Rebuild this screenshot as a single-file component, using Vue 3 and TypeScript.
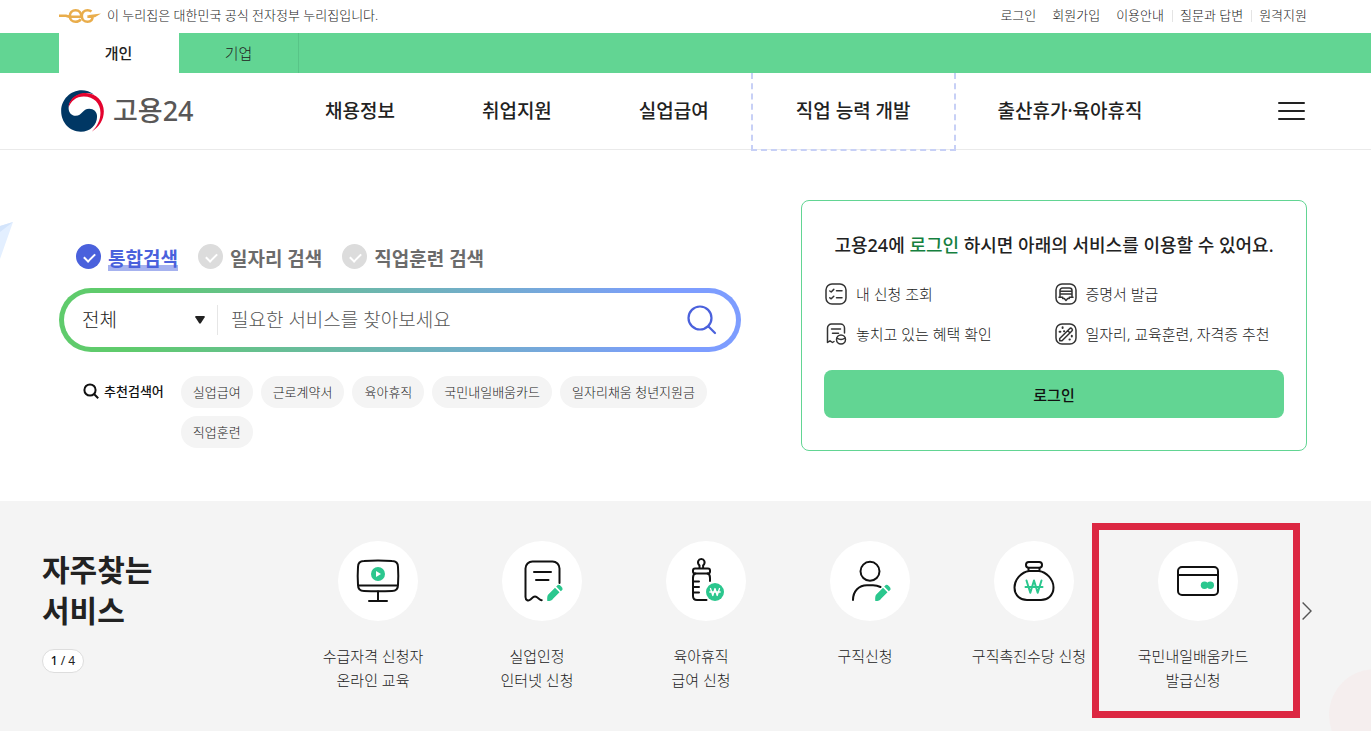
<script setup lang="ts">
import { ref } from 'vue'

interface Service {
  icon: string
  lines: string[]
  marked?: boolean
}

const utilLinks = [
  { label: '로그인', divided: false },
  { label: '회원가입', divided: false },
  { label: '이용안내', divided: false },
  { label: '질문과 답변', divided: true },
  { label: '원격지원', divided: true },
]
const menu = ['채용정보', '취업지원', '실업급여', '직업 능력 개발', '출산휴가·육아휴직']
const focusedMenu = '직업 능력 개발'

const modes = ['통합검색', '일자리 검색', '직업훈련 검색']
const mode = ref('통합검색')
const scope = ref('전체')
const keyword = ref('')
const keywords = ['실업급여', '근로계약서', '육아휴직', '국민내일배움카드', '일자리채움 청년지원금', '직업훈련']

const benefits = [
  { icon: 'list', label: '내 신청 조회' },
  { icon: 'certificate', label: '증명서 발급' },
  { icon: 'receipt', label: '놓치고 있는 혜택 확인' },
  { icon: 'wand', label: '일자리, 교육훈련, 자격증 추천' },
]

const services: Service[] = [
  { icon: 'monitor', lines: ['수급자격 신청자', '온라인 교육'] },
  { icon: 'document', lines: ['실업인정', '인터넷 신청'] },
  { icon: 'bottle', lines: ['육아휴직', '급여 신청'] },
  { icon: 'person', lines: ['구직신청'] },
  { icon: 'bag', lines: ['구직촉진수당 신청'] },
  { icon: 'card', lines: ['국민내일배움카드', '발급신청'], marked: true },
]
</script>

<template>
  <div class="page">
    <div class="topbar">
      <p class="official">
        <svg class="eg" viewBox="0 0 42 16" width="42" height="16" fill="none" stroke="#e9ad4b" stroke-width="2.6" aria-hidden="true">
          <path d="M0 7.800h7l3 1h12.400c0-4-2.200-6.600-5.800-6.600-3.400 0-5.800 2.600-5.800 5.800s2.400 5.800 5.800 5.800c2.400 0 4-.9 5.200-2.600" />
          <path d="M32.500 3.600c-1.100-.9-2.400-1.400-3.900-1.400-3.400 0-5.800 2.600-5.800 5.800s2.400 5.800 5.800 5.800c3.300 0 5-2 5-5.200h-5.200" />
          <path d="M30 7l12-1.400-6 3.600h-6z" fill="#e9ad4b" stroke="none" />
        </svg>
        <span>이 누리집은 대한민국 공식 전자정부 누리집입니다.</span>
      </p>
      <ul class="utils">
        <li v-for="link in utilLinks" :key="link.label" :class="{ divided: link.divided }">
          <a href="#">{{ link.label }}</a>
        </li>
      </ul>
    </div>

    <div class="tabs">
      <a href="#" class="tab current">개인</a>
      <a href="#" class="tab">기업</a>
    </div>

    <header class="header">
      <a href="#" class="logo">
        <svg viewBox="0 0 126 124" width="43" height="42" aria-hidden="true">
          <path fill="#003764" d="M98 14C86 5 73 1 61 1 27 1 0 29 0 62c0 34 25 61 58 61 28 0 48-20 48-45 0-14-10-23-23-23-20 0-21 21-40 21-12 0-21-9-21-23 0-21 18-39 44-43 12-1 23 0 32 4z" />
          <path fill="#e4032e" d="M22 52c0-22 19-40 44-43 36-3 60 24 60 54 0 25-14 47-36 60 16-15 26-34 26-56 0-28-20-48-49-48-23 0-39 14-45 33z" />
        </svg>
        <span>고용24</span>
      </a>
      <nav class="menu">
        <a v-for="item in menu" :key="item" href="#" :class="{ focused: item === focusedMenu }">{{ item }}</a>
      </nav>
      <button type="button" class="burger" aria-label="전체메뉴">
        <i></i><i></i><i></i>
      </button>
    </header>

    <main>
      <section class="hero">
        <svg class="plane" viewBox="0 0 13 40" width="13" height="40" aria-hidden="true">
          <path fill="#e3efff" d="M0 4L13 0 0 37z" />
          <path fill="#d3e4fb" d="M0 4L13 0 0 10z" />
        </svg>

        <form class="search" @submit.prevent>
          <div class="modes">
            <label v-for="m in modes" :key="m" class="mode">
              <input v-model="mode" type="radio" name="mode" :value="m" />
              <span>{{ m }}</span>
            </label>
          </div>
          <div class="searchbox">
            <div class="searchbox-inner">
              <div class="scope">
                <select v-model="scope" aria-label="검색 범위">
                  <option>전체</option>
                </select>
                <svg viewBox="0 0 10 8" width="10" height="8" aria-hidden="true">
                  <path fill="#222" d="M1 0h8q1.200.2.700 1.300L5.800 7.200q-.8.900-1.600 0L.3 1.300Q-.2.200 1 0z" />
                </svg>
              </div>
              <input v-model="keyword" class="query" type="text" aria-label="검색어" placeholder="필요한 서비스를 찾아보세요" />
              <button type="submit" class="go" aria-label="검색">
                <svg viewBox="0 0 30 30" width="30" height="30" fill="none" stroke="#4a61dc" stroke-width="2.200" stroke-linecap="round">
                  <circle cx="13" cy="13" r="11.500" />
                  <path d="M21.500 21.500l6.500 6.500" />
                </svg>
              </button>
            </div>
          </div>
          <div class="recommend">
            <strong>
              <svg viewBox="0 0 16 16" width="16" height="16" fill="none" stroke="#111" stroke-width="2" aria-hidden="true">
                <circle cx="7" cy="7" r="5.600" />
                <path d="M11 11l4.200 4.200" />
              </svg>
              추천검색어
            </strong>
            <ul>
              <li v-for="k in keywords" :key="k"><a href="#">{{ k }}</a></li>
            </ul>
          </div>
        </form>

        <section class="login">
          <h2>고용24에 <em>로그인</em> 하시면 아래의 서비스를 이용할 수 있어요.</h2>
          <ul>
            <li v-for="b in benefits" :key="b.label">
              <svg viewBox="0 0 22 22" width="22" height="22" fill="none" stroke="#333" stroke-width="1.500" stroke-linecap="round" stroke-linejoin="round" aria-hidden="true">
                <rect v-if="b.icon !== 'receipt'" x="1" y="1" width="20" height="20" rx="6" />
                <g v-if="b.icon === 'list'">
                  <path d="M4.800 8l1.400 1 2.600-2.600M4.800 14.800l1.400 1 2.600-2.600M11.500 7.700h5.500M11.500 14.700h5.500" />
                </g>
                <g v-else-if="b.icon === 'certificate'">
                  <path d="M5 14V7.500A2.500 2.500 0 0 1 7.500 5h7A2.500 2.500 0 0 1 17 7.500V14M5.500 8.200h11M5.500 11h11M4 14.300h3.700M14.300 14.300h3.700M7.700 14.300v1.200h1.600l1.700 2 1.700-2h1.600v-1.200" />
                </g>
                <g v-else-if="b.icon === 'receipt'">
                  <path d="M19.500 10V5a4 4 0 0 0-4-4h-9a4 4 0 0 0-4 4v14.500l2.500-1.700 2.500 1.700 1.500-1M6.500 6h9M7.500 10.300h6" />
                  <circle cx="16" cy="16.500" r="4.500" />
                  <path d="M12 15.200q4 2.600 8 0" />
                </g>
                <g v-else>
                  <path d="M14.600 5.700a1.600 1.600 0 0 1 2.300 2.300L7 17.800H4.700v-2.300zM12.800 7.800l2 2" />
                  <path d="M7.600 4.300v.8M4.600 8.800h.8M9 8.200h.2M16.800 12.800v.6M14.500 16.500h.3" stroke-width="2" />
                </g>
              </svg>
              <span>{{ b.label }}</span>
            </li>
          </ul>
          <button type="button">로그인</button>
        </section>
      </section>

      <section class="services">
        <div class="intro">
          <h2>자주찾는<br />서비스</h2>
          <p class="pager"><b>1</b> / 4</p>
        </div>
        <ul class="list">
          <li v-for="s in services" :key="s.icon" :class="{ marked: s.marked }">
            <a href="#">
              <svg class="disc" viewBox="0 0 80 80" width="80" height="80" fill="none" stroke="#111" stroke-width="2" stroke-linecap="round" stroke-linejoin="round" aria-hidden="true">
                <g v-if="s.icon === 'monitor'">
                  <path d="M26 20q14-.8 28 0 6 0 6 6 .6 9 0 18 0 6-6 6-14 .6-28 0-6 0-6-6-.6-9 0-18 0-6 6-6zM20 44.500h40M40 50v10M31 60h18" />
                  <circle cx="40" cy="33" r="7" fill="#2bc78e" stroke="none" />
                  <path d="M38 30v6l5-3z" fill="#fff" stroke="none" />
                </g>
                <g v-else-if="s.icon === 'document'">
                  <path d="M57.500 42V27.500a7 7 0 0 0-7-7h-20a7 7 0 0 0-7 7V56c0 3.500 3 4.200 5 2.500l2.500-2.200q2-1.500 4 0l2.200 1.700q1.200 1 2.500 1.200M32 31h17M34 39h12.500" />
                </g>
                <g v-else-if="s.icon === 'bottle'">
                  <path d="M33.500 27v-2.500c-3-3-1-6.500 1.800-6.500s4.800 3.500 1.800 6.500V27" />
                  <rect x="27" y="27.500" width="17" height="5" rx="2" />
                  <path d="M44 40v-3q0-4-2.500-4.500M29.500 32.500Q27 33 27 37v18q0 4 4 4h9.500M27 40.500h6M27 46h6M27 51.500h6" />
                  <circle cx="49" cy="51" r="9" fill="#2bc78e" stroke="none" />
                  <path d="M44.500 47.500l2.300 7 2.200-7 2.200 7 2.300-7M43.800 51h10.400" stroke="#fff" stroke-width="1.300" />
                </g>
                <g v-else-if="s.icon === 'person'">
                  <circle cx="40" cy="30.300" r="9.500" />
                  <path d="M23 59c0-9 6-14.800 14-14.800h6c2.800 0 5.200.6 7.500 1.800" />
                </g>
                <g v-else-if="s.icon === 'bag'">
                  <rect x="32" y="21" width="16" height="5.800" rx="2.800" />
                  <path d="M34.500 27v3M45.500 27v3M35 30h10c7 1 14.500 8 14.500 16.500S53 59 47 59H33c-6 0-12.500-4-12.500-12.500S28 31 35 30z" />
                  <path d="M32.500 39.500l3.800 12.300L40 39.500l3.700 12.300 3.800-12.300M31.500 46h17" stroke="#2bc78e" />
                </g>
                <g v-else>
                  <rect x="20" y="26" width="40" height="28" rx="4" />
                  <path d="M20 34h40" />
                  <g fill="#2bc78e" stroke="none">
                    <circle cx="46.500" cy="44.300" r="3.700" />
                    <circle cx="52.300" cy="44.300" r="3.700" />
                  </g>
                </g>
                <g v-if="s.icon === 'document' || s.icon === 'person'" fill="#2bc78e" stroke="none">
                  <path d="M45.300 60q-.6-5 1.200-6.800l6.500-6.500 4.500 4.500-6.500 6.500Q50 60 45.300 60z" />
                  <path d="M54.200 45.600l1.600-1.600q1.300-.6 3.300 1.300t1.400 3.500l-1.700 1.400z" />
                </g>
              </svg>
              <span>
                <template v-for="(line, i) in s.lines" :key="line"><br v-if="i > 0" />{{ line }}</template>
              </span>
            </a>
          </li>
        </ul>
        <button type="button" class="next" aria-label="다음">
          <svg viewBox="0 0 10 20" width="10" height="20" fill="none" stroke="#555" stroke-width="1.400">
            <path d="M.6 1.500L9 10 .6 18.500" />
          </svg>
        </button>
        <div class="blob"></div>
      </section>
    </main>
  </div>
</template>

<style>
body {
  background: #fff;
}
</style>

<style scoped>
.page,
.page * {
  box-sizing: border-box;
}
.page {
  font-family: "Noto Sans", "Noto Sans CJK KR", sans-serif;
  font-size: 15px;
  color: #222;
  overflow-x: hidden;
}
a {
  color: inherit;
  text-decoration: none;
}
ul,
p,
h2 {
  margin: 0;
  padding: 0;
  list-style: none;
}
button,
input,
select {
  font: inherit;
  color: inherit;
  margin: 0;
  padding: 0;
  border: 0;
  background: none;
}
svg {
  flex: none;
  display: block;
}

.topbar {
  display: flex;
  justify-content: space-between;
  align-items: center;
  padding: 4px 64px 6px 59px;
  font-size: 13px;
  line-height: 23px;
  font-weight: 300;
}
.official {
  display: flex;
  align-items: center;
  gap: 6px;
}
.utils {
  display: flex;
  gap: 16px;
}
.utils .divided {
  position: relative;
}
.utils .divided::before {
  content: "";
  position: absolute;
  left: -8px;
  top: 6px;
  height: 12px;
  border-left: 1px solid #e4e4e4;
}

.tabs {
  display: flex;
  padding-left: 59px;
  background: #62d593;
}
.tab {
  width: 120px;
  line-height: 40px;
  text-align: center;
  border-right: 1px solid #58c487;
  font-weight: 300;
}
.tab.current {
  background: #fff;
  border-color: #fff;
  font-weight: 500;
}

.header {
  display: flex;
  align-items: center;
  height: 77px;
  padding: 0 66px 0 61px;
  border-bottom: 1px solid #eaeaea;
}
.logo {
  display: flex;
  align-items: center;
  gap: 9px;
  width: 221px;
  font-size: 27px;
  font-weight: 500;
  line-height: 40px;
  color: #595757;
}
.menu {
  display: flex;
  flex: 1;
  gap: 3px;
  font-size: 19px;
  font-weight: 500;
  line-height: 77px;
  margin-left: 1px;
}
.menu a {
  position: relative;
  padding: 0 42px;
  white-space: nowrap;
}
.menu .focused::after {
  content: "";
  position: absolute;
  inset: 0 -3px -1px;
  border: 2px dashed #c7d0f6;
  border-top: 0;
}
.burger {
  display: flex;
  flex-direction: column;
  gap: 6px;
  width: 27px;
}
.burger i {
  height: 2px;
  border-radius: 1px;
  background: #222;
}

.hero {
  position: relative;
  display: grid;
  grid-template-columns: minmax(0, 682fr) minmax(0, 506fr);
  align-items: start;
  gap: 60px;
  padding: 50px 64px 50px 59px;
}
.plane {
  position: absolute;
  left: 0;
  top: 72px;
}
.search {
  padding-top: 44px;
}
.modes {
  display: flex;
  gap: 20px;
  height: 26px;
  padding-left: 17px;
  margin-bottom: 18px;
  font-size: 19px;
  font-weight: 700;
  line-height: 26px;
  color: #6b6b6b;
}
.mode {
  display: flex;
  gap: 7px;
}
.mode input {
  position: relative;
  appearance: none;
  width: 25px;
  height: 25px;
  border-radius: 50%;
  background: #dcdcdc;
}
.mode input::after {
  content: "";
  position: absolute;
  left: 10px;
  top: 7px;
  width: 5px;
  height: 9px;
  border: solid #fff;
  border-width: 0 2px 2px 0;
  transform: rotate(45deg);
}
.mode input:checked {
  background: #4a61dc;
}
.mode input:checked + span {
  color: #4a61dc;
  background: linear-gradient(#a6b2ef, #a6b2ef) 0 21px / 100% 6px no-repeat;
}
.mode span {
  height: 27px;
  padding-top: 2px;
}
.searchbox {
  padding: 5px;
  border-radius: 32px;
  background: linear-gradient(90deg, #5fcb6c 10%, #7d9dff 90%);
}
.searchbox-inner {
  display: flex;
  align-items: center;
  height: 54px;
  padding: 0 19px 0 18px;
  border-radius: 27px;
  background: #fff;
  font-size: 19px;
  font-weight: 300;
}
.scope {
  display: flex;
  align-items: center;
  width: 136px;
  height: 30px;
  padding-right: 12px;
  border-right: 1px solid #e6e6e6;
}
.scope select {
  flex: 1;
  appearance: none;
  line-height: 30px;
}
.query {
  flex: 1;
  min-width: 0;
  height: 40px;
  padding-left: 13px;
}
.query::placeholder {
  color: #555;
  opacity: 1;
}
.recommend {
  display: flex;
  align-items: flex-start;
  gap: 17px;
  padding: 24px 0 0 24px;
  font-size: 13px;
  line-height: 32px;
}
.recommend strong {
  display: flex;
  align-items: center;
  gap: 5px;
  height: 30px;
  font-weight: 500;
  color: #111;
  white-space: nowrap;
}
.recommend ul {
  display: flex;
  flex-wrap: wrap;
  gap: 8px;
}
.recommend li a {
  display: block;
  padding: 0 12px;
  border-radius: 16px;
  background: #f4f4f4;
  font-weight: 300;
}

.login {
  padding: 26px 22px 32px;
  border: 1px solid #62d593;
  border-radius: 8px;
  background: #fff;
}
.login h2 {
  font-size: 18px;
  font-weight: 500;
  line-height: 36px;
  text-align: center;
  white-space: nowrap;
}
.login em {
  font-style: normal;
  color: #15803f;
}
.login ul {
  display: grid;
  grid-template-columns: 1fr 1fr;
  gap: 18px 0;
  padding: 20px 0 25px 1px;
}
.login li {
  display: flex;
  align-items: center;
  gap: 9px;
  line-height: 22px;
  font-weight: 300;
  white-space: nowrap;
}
.login button {
  width: 100%;
  height: 48px;
  border-radius: 8px;
  background: #62d593;
  color: #111;
  font-weight: 500;
}

.services {
  position: relative;
  display: flex;
  align-items: flex-start;
  min-height: 230px;
  padding: 40px 59px 39px 42px;
  background: #f4f4f4;
  overflow: hidden;
}
.intro {
  width: 249px;
  padding-top: 8px;
}
.intro h2 {
  font-size: 30px;
  font-weight: 700;
  line-height: 41px;
}
.pager {
  width: 42px;
  margin-top: 18px;
  border: 1px solid #ddd;
  border-radius: 12px;
  background: #fff;
  font-size: 12px;
  line-height: 22px;
  text-align: center;
}
.pager b {
  font-weight: 500;
  color: #111;
}
.list {
  display: grid;
  grid-template-columns: repeat(6, 1fr);
  flex: 1;
}
.list li {
  position: relative;
}
.list a {
  display: flex;
  flex-direction: column;
  align-items: center;
  gap: 23px;
  line-height: 24px;
  font-weight: 300;
  text-align: center;
  white-space: nowrap;
}
.disc {
  margin-left: 10px;
  border-radius: 50%;
  background: #fff;
}
.marked::after {
  content: "";
  position: absolute;
  inset: -18px -25px -26px -19px;
  border: 7px solid #dc2742;
}
.next {
  margin: 60px 0 0 27px;
}
.blob {
  position: absolute;
  right: -50px;
  bottom: -30px;
  width: 92px;
  height: 92px;
  border-radius: 50%;
  background: #f5eeee;
}
</style>
